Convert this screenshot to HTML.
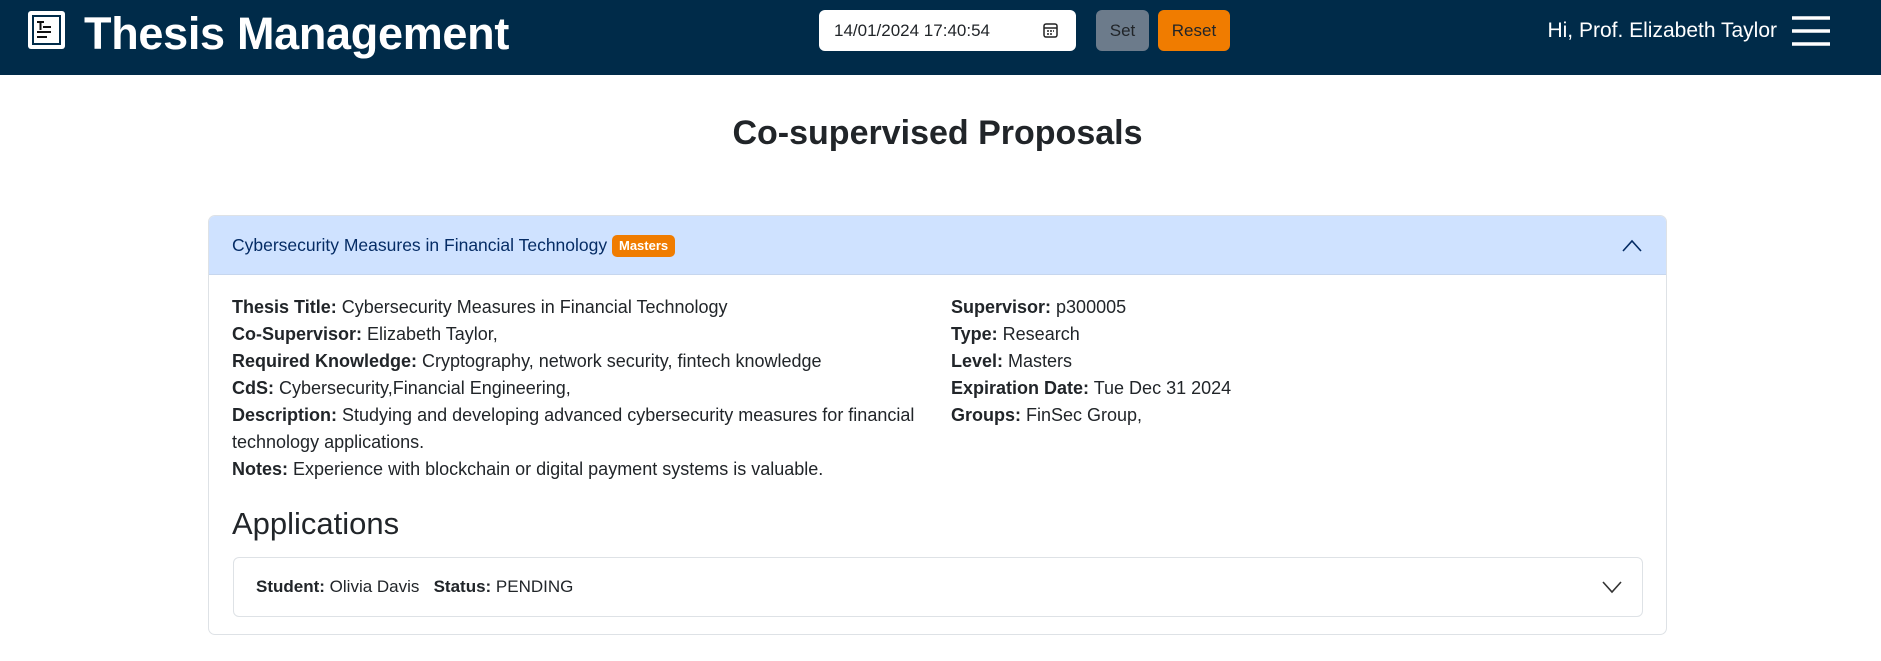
<!DOCTYPE html>
<html><head><meta charset="utf-8"><style>
*{box-sizing:border-box;margin:0;padding:0}
body{width:1881px;height:661px;overflow:hidden;background:#fff;font-family:"Liberation Sans",sans-serif;color:#212529;position:relative}
.nav{position:absolute;left:0;top:0;width:1881px;height:75px;background:#002b49}
.abs{position:absolute}
.title{left:84px;top:4px;font-size:45px;font-weight:bold;color:#fff;line-height:60px;letter-spacing:-0.3px}
.date{left:819px;top:10px;width:257px;height:41px;background:#fff;border-radius:6px;font-size:17px;line-height:41px;padding-left:15px;color:#212529}
.btn{top:10px;height:41px;border-radius:6px;font-size:17px;line-height:41px;text-align:center;color:#212529}
.hi{right:104px;top:14px;font-size:21px;color:#fff;line-height:34px}
h1{position:absolute;left:0;width:1875px;text-align:center;top:111px;font-size:34px;line-height:44px;font-weight:bold}
.card{left:208px;top:215px;width:1459px;height:420px;border:1px solid #dee2e6;border-radius:7px;overflow:hidden}
.hdr{position:absolute;left:0;top:0;width:100%;height:59px;background:#cfe2ff;border-bottom:1px solid #c6d6ee}
.row{font-size:18px;line-height:27px;position:absolute}
b{font-weight:bold}
</style></head><body>
<div class="nav"></div>
<svg class="abs" style="left:27px;top:10px" width="39" height="40" viewBox="0 0 39 40">
<rect x="1" y="1" width="37" height="38" rx="3" fill="#fff"/>
<rect x="5" y="5" width="29" height="30" fill="#002b49"/>
<rect x="7" y="7" width="25" height="26" fill="#fff"/>
<path d="M10 12h7M13.5 12v8M16 17h8M10 22h14M10 27h10" stroke="#111" stroke-width="2" fill="none"/>
</svg>
<div class="abs title">Thesis Management</div>
<div class="abs date">14/01/2024 17:40:54
<svg class="abs" style="left:224px;top:13px" width="15" height="15" viewBox="0 0 15 15"><rect x="1" y="1" width="13" height="13" rx="2" fill="none" stroke="#222" stroke-width="1.5"/><path d="M1 5h13" stroke="#222" stroke-width="1.5"/><path d="M4 8h2M7 8h2M10 8h1M4 11h2M7 11h2" stroke="#222" stroke-width="1.5"/></svg></div>
<div class="abs btn" style="left:1096px;width:53px;background:#6c7b8b">Set</div>
<div class="abs btn" style="left:1158px;width:72px;background:#f07c00">Reset</div>
<div class="abs hi">Hi, Prof. Elizabeth Taylor</div>
<svg class="abs" style="left:1792px;top:15px" width="38" height="32"><path d="M0 3h38M0 16h38M0 29h38" stroke="#fff" stroke-width="3.5"/></svg>
<h1>Co-supervised Proposals</h1>
<div class="abs card">
<div class="hdr"></div>
<div class="row" style="left:23px;top:16px;color:#052c65;font-size:17.5px">Cybersecurity Measures in Financial Technology <span style="display:inline-block;background:#f07c00;color:#fff;font-size:13px;font-weight:bold;line-height:22px;padding:0 7px;border-radius:5px;vertical-align:1px">Masters</span></div>
<svg class="abs" style="left:1413px;top:23px" width="20" height="13"><path d="M1 12L10 2l9 10" stroke="#052c65" stroke-width="1.6" fill="none"/></svg>
<div class="row" style="left:23px;top:78px;width:700px">
<b>Thesis Title:</b> Cybersecurity Measures in Financial Technology<br>
<b>Co-Supervisor:</b> Elizabeth Taylor,<br>
<b>Required Knowledge:</b> Cryptography, network security, fintech knowledge<br>
<b>CdS:</b> Cybersecurity,Financial Engineering,<br>
<b>Description:</b> Studying and developing advanced cybersecurity measures for financial technology applications.<br>
<b>Notes:</b> Experience with blockchain or digital payment systems is valuable.</div>
<div class="row" style="left:742px;top:78px">
<b>Supervisor:</b> p300005<br><b>Type:</b> Research<br><b>Level:</b> Masters<br><b>Expiration Date:</b> Tue Dec 31 2024<br><b>Groups:</b> FinSec Group,</div>
<div class="abs" style="left:23px;top:289px;font-size:31px;line-height:38px">Applications</div>
<div class="abs" style="left:24px;top:341px;width:1410px;height:60px;border:1px solid #dee2e6;border-radius:6px">
<div class="row" style="left:22px;top:15px;font-size:17px"><b>Student:</b> Olivia Davis &nbsp;&nbsp;<b>Status:</b> PENDING</div>
<svg class="abs" style="left:1368px;top:23px" width="20" height="13"><path d="M1 1l9 10 9-10" stroke="#333" stroke-width="1.6" fill="none"/></svg>
</div>
</div>
</body></html>
